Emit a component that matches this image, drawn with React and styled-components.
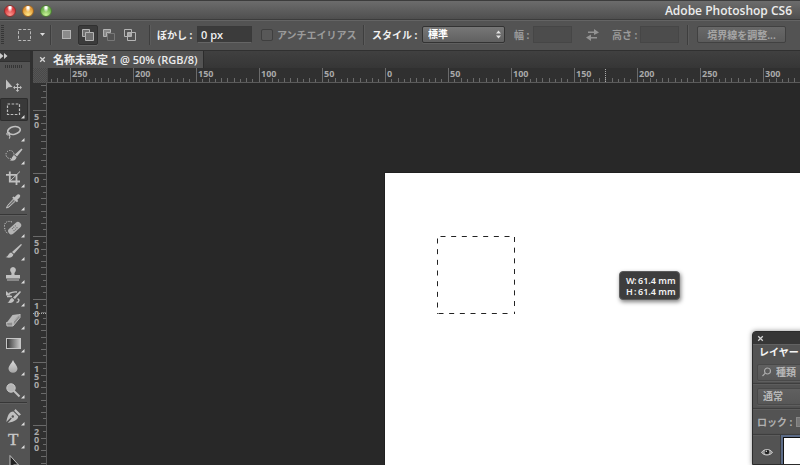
import React from "react";
import styled, { createGlobalStyle, css } from "styled-components";

const UI = '"Open Sans", "Noto Sans", "Noto Sans CJK JP", sans-serif';
const JP = '"Noto Sans", "Noto Sans CJK JP", sans-serif';

const GlobalStyle = createGlobalStyle`
  * { box-sizing: border-box; }
  body { margin: 0; background: #282828; }
  button, input, select { font: inherit; color: inherit; margin: 0; padding: 0; }
  svg { display: block; }
`;

const Window = styled.div`
  position: relative;
  display: flex;
  flex-direction: column;
  height: 100vh;
  overflow: hidden;
  font-family: ${JP};
  font-size: 10px;
  line-height: 16px;
  color: #e6e6e6;
  background: #282828;
`;

const TitleBar = styled.header`
  display: flex;
  align-items: center;
  justify-content: space-between;
  height: 20px;
  flex: none;
  padding: 2px 8px 0 4px;
  background: linear-gradient(#3c3c3c 0 1px, #6c6c6c 1px, #4f4f4f 19px, #3c3c3c 19px);
`;

const Lights = styled.div`
  display: flex;
  gap: 6px;
`;

const Light = styled.button`
  width: 12px;
  height: 12px;
  border: 1px solid ${(p) => p.$edge};
  border-radius: 50%;
  background: radial-gradient(ellipse at 50% 12%, #fff 0 12%, transparent 40%),
    radial-gradient(circle at 50% 90%, ${(p) => p.$glow}, ${(p) => p.$tone} 65%);
`;

const Title = styled.h1`
  margin: 0;
  font: 600 12px/16px ${UI};
  color: #ececec;
`;

const OptionsBar = styled.form`
  display: flex;
  align-items: center;
  height: 31px;
  flex: none;
  padding: 0 0 2px 1px;
  border-top: 1px solid #646464;
  border-bottom: 1px solid #303030;
  background: #535353;
  white-space: nowrap;
  font-weight: 700;
`;

const Grip = styled.span`
  width: 3px;
  height: 19px;
  margin-right: 10px;
  background: repeating-linear-gradient(#363636 0 1px, transparent 1px 2px);
`;

const Divider = styled.span`
  width: 2px;
  height: 20px;
  flex: none;
  margin: 0 ${(p) => p.$after}px 0 ${(p) => p.$before}px;
  border-left: 1px solid #3e3e3e;
  border-right: 1px solid #5c5c5c;
`;

const Preset = styled.button`
  display: flex;
  align-items: center;
  gap: 6px;
  width: 34px;
  border: 0;
  background: none;
`;

const Modes = styled.div`
  display: flex;
  gap: 1px;
`;

const Mode = styled.button`
  display: grid;
  place-items: center;
  width: 20px;
  height: 20px;
  border: 1px solid transparent;
  border-radius: 2px;
  background: none;
  ${(p) => p.$active && css`
    border-color: #303030;
    background: #3b3b3b;
    box-shadow: 0 1px 0 #646464;
  `}
`;

const Label = styled.label`
  flex: none;
  width: ${(p) => p.$width}px;
  color: ${(p) => (p.$off ? "#9b9b9b" : "#f0f0f0")};
`;

const Field = styled.input`
  width: ${(p) => p.$width}px;
  height: 17px;
  padding: 0 3px;
  border: 1px solid #3a3a3a;
  border-bottom-color: #656565;
  background: #3b3b3b;
  font: 600 11px/15px ${UI};
  color: #f0f0f0;
  &:disabled { background: #4c4c4c; border-color: #464646; }
`;

const Check = styled.input`
  appearance: none;
  width: 12px;
  height: 12px;
  margin: 0 4px 0 9px;
  border: 1px solid #3f3f3f;
  border-radius: 2px;
  background: #585858;
`;

const SelectBox = styled.span`
  display: flex;
  align-items: center;
  width: ${(p) => p.$width}px;
  height: 17px;
  flex: none;
  margin-right: ${(p) => p.$after || 0}px;
  padding-right: 3px;
  border: 1px solid ${(p) => (p.$flat ? "#494949" : "#333")};
  border-radius: 2px;
  background: ${(p) => (p.$flat ? "linear-gradient(#606060, #575757)" : "linear-gradient(#777, #606060)")};
  box-shadow: 0 1px 0 #5f5f5f;
`;

const Select = styled.select`
  flex: 1;
  min-width: 0;
  padding-left: 5px;
  border: 0;
  appearance: none;
  background: none;
  font: 700 10px/15px ${JP};
  color: ${(p) => (p.$off ? "#b8b8b8" : "#fff")};
`;

const Swap = styled.span`
  width: 40px;
  padding-left: 14px;
`;

const Refine = styled.button`
  width: 89px;
  height: 17px;
  flex: none;
  border: 1px solid #414141;
  border-radius: 2px;
  background: linear-gradient(#686868, #5b5b5b);
  font: 700 10px/14px ${JP};
  color: #a5a5a5;
`;

const Body = styled.div`
  display: flex;
  flex: 1;
  min-height: 0;
`;

const Toolbox = styled.nav`
  width: 30px;
  flex: none;
  overflow: hidden;
  background: #535353;
`;

const Expand = styled.button`
  display: block;
  width: 100%;
  height: 11px;
  border: 0;
  border-bottom: 1px solid #303030;
  background: #393939;
`;

const ToolGrip = styled.div`
  width: 18px;
  height: 3px;
  margin: 3px 5px 7px;
  background: repeating-linear-gradient(90deg, #343434 0 1px, transparent 1px 2px);
`;

const Tool = styled.button`
  display: block;
  width: 28px;
  height: 23px;
  border: 0;
  border-radius: 2px;
  color: #c0c0c0;
  background: none;
  ${(p) => p.$active && css`
    background: #393939;
    box-shadow: inset 0 0 0 1px #2d2d2d;
  `}
`;

const ToolRule = styled.hr`
  width: 27px;
  height: 2px;
  margin: 1px 0;
  border: 0;
  border-top: 1px solid #373737;
  border-bottom: 1px solid #5e5e5e;
`;

const Document = styled.main`
  display: flex;
  flex-direction: column;
  flex: 1;
  min-width: 0;
  border-left: 3px solid #303030;
`;

const Tabs = styled.div`
  display: flex;
  height: 17px;
  flex: none;
  background: linear-gradient(#404040, #363636);
`;

const Tab = styled.div`
  display: flex;
  align-items: center;
  padding: 0 6px;
  border-right: 1px solid #2c2c2c;
  background: #535353;
  font: 600 11px/16px "Open Sans", "Noto Sans CJK JP", sans-serif;
  color: #ececec;
  white-space: nowrap;
`;

const Close = styled.button`
  width: 7px;
  height: 7px;
  margin-right: ${(p) => p.$gap || 0}px;
  border: 0;
  background: none;
`;

const RulerRow = styled.div`
  display: flex;
  height: 15px;
  flex: none;
  background: #303030;
`;

const Corner = styled.div`
  width: 14px;
  flex: none;
  background: repeating-conic-gradient(#555 0 25%, #494949 0 50%) 0 0 / 2px 2px;
`;

const TopRuler = styled.div`
  position: relative;
  display: flex;
  flex: 1;
  min-width: 0;
  overflow: hidden;
  border-bottom: 1px solid #5a5a5a;
  border-left: 1px solid #484848;
`;

const TopTrack = styled.div`
  display: flex;
  margin-left: -41px;
`;

const TopCell = styled.div`
  display: grid;
  width: 63px;
  flex: none;
  font: 700 9px/12px ${UI};
  color: #a9a9a9;
  > * { grid-area: 1 / 1; }
  > span { padding-left: 2px; justify-self: start; }
`;

const Pointer = styled.i`
  position: absolute;
  top: 1px;
  left: 557px;
  height: 13px;
  border-left: 1px dotted #aaa;
`;

const SidePointer = styled.i`
  position: absolute;
  top: 230px;
  left: 0;
  width: 13px;
  border-top: 1px dotted #aaa;
`;

const Work = styled.div`
  display: flex;
  flex: 1;
  min-height: 0;
`;

const SideRuler = styled.div`
  position: relative;
  width: 14px;
  flex: none;
  overflow: hidden;
  border-right: 1px solid #5a5a5a;
  background: #303030;
`;

const SideTrack = styled.div`
  margin-top: -36px;
`;

const SideCell = styled.div`
  display: grid;
  height: 63px;
  font: 700 9px/8px ${UI};
  color: #a9a9a9;
  > * { grid-area: 1 / 1; }
  > span { align-self: start; width: 6px; padding: 3px 0 0 1px; word-break: break-all; }
`;

const Stage = styled.section`
  position: relative;
  flex: 1;
  overflow: hidden;
  background: #282828;
`;

const Artboard = styled.div`
  position: absolute;
  top: 90px;
  left: 338px;
  right: 0;
  bottom: 0;
  background: #fff;
  box-shadow: 0 0 0 1px #202020;
`;

const Marquee = styled.svg`
  position: absolute;
  top: 63px;
  left: 52px;
`;

const Readout = styled.output`
  position: absolute;
  top: 98px;
  left: 234px;
  padding: 3px 4px 2px 6px;
  border: 1px solid #5c5c5c;
  border-radius: 4px;
  background: #3d3d3d;
  box-shadow: 1px 2px 4px rgba(0, 0, 0, 0.5);
  font: 600 9px/11px "Noto Sans", sans-serif;
  color: #f2f2f2;
  white-space: pre;
  > div { display: grid; grid-template-columns: 8px 4px 37px; }
`;

const Panel = styled.aside`
  position: absolute;
  top: 331px;
  left: 752px;
  width: 240px;
  bottom: 0;
  overflow: hidden;
  border: 1px solid #2c2c2c;
  border-radius: 4px 4px 0 0;
  background: #535353;
  box-shadow: 0 0 5px rgba(0, 0, 0, 0.45);
  font-weight: 700;
`;

const PanelHead = styled.div`
  display: flex;
  align-items: center;
  height: 12px;
  padding-left: 4px;
  background: #363636;
`;

const PanelTab = styled.h2`
  margin: 0;
  height: 17px;
  padding-left: 6px;
  border-top: 1px solid #626262;
  font: 700 10px/15px ${JP};
  color: #f4f4f4;
`;

const PanelRow = styled.div`
  display: flex;
  align-items: center;
  height: ${(p) => p.$height}px;
  padding-left: 4px;
  border-bottom: 1px solid #3e3e3e;
  box-shadow: inset 0 -1px 0 #505050, 0 1px 0 #5d5d5d;
  color: #b0b0b0;
  white-space: nowrap;
`;

const LockButton = styled.button`
  width: 16px;
  height: 10px;
  margin-left: 4px;
  border: 1px solid #888;
  background: #777;
`;

const Layer = styled.div`
  display: flex;
  height: 34px;
`;

const Eye = styled.button`
  display: grid;
  place-items: center;
  width: 28px;
  border: 0;
  border-right: 1px solid #3e3e3e;
  background: none;
`;

const Thumb = styled.div`
  flex: 1;
  padding: 2px 0 0 2px;
  background: #5c6c88;
  &::before {
    content: "";
    display: block;
    height: 32px;
    border: 1px solid #111;
    border-bottom: 0;
    background: #fff;
  }
`;

const CloseMark = () => (
  <svg width="7" height="7" viewBox="0 0 7 7" stroke="#d5d5d5" strokeWidth="1.3">
    <path d="M1.2 1.2 5.8 5.8M5.8 1.2 1.2 5.8" />
  </svg>
);

const UpDown = () => (
  <svg width="5" height="9" viewBox="0 0 5 9" fill="#e2e2e2">
    <path d="M0 3.5 2.5.5 5 3.5zM0 5.5h5L2.5 8.5z" />
  </svg>
);

const stroke = { fill: "none", stroke: "currentColor" };

const tools = [
  ["移動", <g key="i"><path fill="currentColor" d="M6 4.5v10l2.4-2.3 4.2-.3z" /><path {...stroke} strokeWidth="1.1" d="M17.5 9v7M14 12.5h7" /><path fill="currentColor" d="m17.500 8 1.800 2h-3.600zm0 9 1.800-2h-3.600zm-4.500-4.500 2-1.800v3.600zm9 0-2-1.800v3.600z" /></g>, "plain"],
  ["長方形選択", <path key="i" {...stroke} strokeWidth="1.2" strokeDasharray="2.6 1.5" d="M7.500 6h12v10.500h-12z" />, "active"],
  ["なげなわ", <g key="i" {...stroke} strokeWidth="1.6"><ellipse cx="14" cy="9.5" rx="6.4" ry="3.8" transform="rotate(-12 14 9.5)" /><path strokeWidth="1.1" d="M9.500 11.500c-3-.5-3.500 2.500-1.500 2.500 2.300 0 2-2.500.5-2.200M9 14c1.500 1 1 2.500 0 3.500" /></g>],
  ["クイック選択", <g key="i"><circle {...stroke} cx="10" cy="10.500" r="4" strokeDasharray="1.3 1.2" /><path fill="currentColor" d="m21.500 4.500 1 1-5.500 7-2.200-1.900zM14.300 11.300l2.300 2c-.8 3.500-4.100 4-7.100 3 2.600-.5 2.300-4.200 4.800-5z" /></g>],
  ["切り抜き", <g key="i"><path {...stroke} strokeWidth="1.8" d="M9.800 4.500v10H20M6 7.800h10.500V18" /><path {...stroke} d="M10 14 20 4.500" /></g>],
  ["スポイト", <g key="i"><path fill="#777" stroke="currentColor" d="m13.500 9 2 2-6.500 6-2.500 1 1-2.500z" /><path fill="currentColor" d="m12.200 7.700 1.300-1.300 1.200.9c1.500-2 3.500-4 5-2.500s-.5 3.500-2.500 5l1 1.200-1.300 1.300z" /></g>],
  "rule",
  ["修復ブラシ", <g key="i"><path {...stroke} strokeDasharray="1.2 1.2" d="M12 5c-5-2-8 1-7.500 5S6 16 8 16" /><g transform="rotate(-42 14.500 11)"><rect x="7" y="8" width="15" height="6.500" rx="3" fill="#b4b4b4" /><path fill="#5c5c5c" d="M12 9.500h1v1h-1zm2 0h1v1h-1zm2 0h1v1h-1zm-4 2.500h1v1h-1zm2 0h1v1h-1zm2 0h1v1h-1z" /></g></g>],
  ["ブラシ", <path key="i" fill="currentColor" d="m21 4 1 .8-8 9-2-1.800zM11.200 12.500l2.200 2c-1 3.500-4.500 4-7.900 2.500 3-.3 2.700-4 5.700-4.500z" />],
  ["スタンプ", <path key="i" fill="currentColor" d="M13 4a3 3 0 0 1 2.500 4.500c-1.200 1.500-1.200 2-.8 3.500h5.300v3.500H6V12h5.300c.4-1.500.4-2-.8-3.500A3 3 0 0 1 13 4zM7 16.500h12v1H7z" />],
  ["ヒストリーブラシ", <g key="i"><path fill="currentColor" d="m20 5 1 1-6 7-2-1.500zM12.300 12l2 2c-1 3-4 3.500-7 2.500 2.500-.5 2.300-4 5-4.500z" /><path {...stroke} strokeWidth="1.4" d="M9 7.500c3-1.500 5-2 8-1.500M7 10.500h5M17.500 13c2 0 2 3-1 3.500" /><path fill="currentColor" d="M6 5v4.500h5z" /></g>],
  ["消しゴム", <g key="i"><path fill="#b7b7b7" d="m12.500 6 7-1L13 13l-6.500 1z" /><path fill="#8d8d8d" stroke="#bdbdbd" d="M6.500 13.500 13 13v4H7zM13 13l7-8v3.500L13 17z" /></g>],
  ["グラデーション", <rect key="i" x="6.5" y="6.5" width="14" height="10" fill="url(#fade)" stroke="#c6c6c6" />],
  ["ぼかし", <path key="i" fill="url(#drop)" d="M13 5c1 3 4.500 5.500 4.500 9a4.600 4.600 0 0 1-9 0C8.500 10.500 12 8 13 5z" />],
  ["覆い焼き", <g key="i"><circle cx="11" cy="10" r="4.2" fill="#b4b4b4" stroke="#cacaca" /><path {...stroke} strokeWidth="2" d="m14 13 5.500 5.500" /></g>],
  "rule",
  ["ペン", <g key="i"><path fill="currentColor" d="m15.500 4 5.500 5.500-1.900 1.300-5-5zM13.300 6.500l5 5c-.8 3.500-3 4.500-10.500 6.500l4-4.500-1-1-4.500 4.500c1.500-7 2.700-10 7-10.500z" /><circle cx="12.800" cy="11.500" r="1.200" fill="#555" /></g>],
  ["文字", "T"],
  ["パス選択", <path key="i" fill="#222" stroke="currentColor" d="M10 4.500v13l3.500-3.500h5z" />],
];

const TypeGlyph = styled.text`
  font: 400 17px "Liberation Serif", serif;
`;

const ToolIcon = ({ art, plain }) => (
  <svg width="28" height="23" viewBox="0 0 28 23">
    {art === "T" ? <TypeGlyph x="8" y="17" fill="#c8c8c8" stroke="#c8c8c8" strokeWidth=".4">T</TypeGlyph> : art}
    {!plain && <path fill="#dedede" d="M24.500 17v3.500H21z" />}
  </svg>
);

const modes = [
  ["新規選択", <rect key="i" x="1.5" y="1.5" width="8" height="8" fill="#8b8b8b" stroke="#b4b4b4" />],
  ["選択範囲に追加", <path key="i" fill="#707070" stroke="#b4b4b4" d="M.5.5h7v3h4v8h-8v-4h-3zM3.500 7.500v-4h4" />],
  ["選択範囲から一部削除", <g key="i"><path fill="#888" stroke="#b4b4b4" d="M.5.5h7v3h-4v4h-3z" /><path fill="none" stroke="#777" d="M4.500 4.500h7v7h-7z" /></g>],
  ["共通範囲", <g key="i" fill="none" stroke="#b4b4b4"><path d="M.5.5h7v7h-7zM3.500 3.500h8v8h-8z" /><path fill="#999" d="M4 4h3v3H4z" /></g>],
];

const topTicks = "M.5 0V14M6.500 11v3M13.500 10v4M19.500 11v3M25.500 10v4M31.500 10v4M38.500 10v4M44.500 11v3M50.500 10v4M56.500 11v3";
const sideTicks = "M0 .5H13M10 6.500h3M8 13.500h5M10 19.500h3M8 25.500h5M8 31.500h5M8 38.500h5M10 44.500h3M8 50.500h5M10 56.500h3";

const topMarks = ["", 250, 200, 150, 100, 50, 0, 50, 100, 150, 200, 250, 300];
const sideMarks = ["", 50, 0, 50, 100, 150, 200];

export default function App() {
  return (
    <Window>
      <GlobalStyle />
      <TitleBar>
        <Lights>
          <Light aria-label="閉じる" $edge="#8b3030" $tone="#d93a3c" $glow="#ff9a92" />
          <Light aria-label="しまう" $edge="#986326" $tone="#e29a35" $glow="#ffe98c" />
          <Light aria-label="拡大" $edge="#4c7a35" $tone="#6bb04a" $glow="#ccf59a" />
        </Lights>
        <Title>Adobe Photoshop CS6</Title>
      </TitleBar>

      <OptionsBar onSubmit={(e) => e.preventDefault()}>
        <Grip />
        <Preset type="button" aria-label="ツールプリセット">
          <svg width="20" height="14" viewBox="0 0 20 14">
            <path fill="none" stroke="#b9b9b9" strokeDasharray="3 1.6" d="M4.500 1.500h12v11h-12z" />
          </svg>
          <svg width="5" height="3" viewBox="0 0 5 3"><path fill="#ddd" d="M0 0h5L2.500 3z" /></svg>
        </Preset>
        <Divider $before={2} $after={5} />
        <Modes>
          {modes.map(([name, art], i) => (
            <Mode key={name} type="button" aria-label={name} $active={i === 1}>
              <svg width="12" height="12" viewBox="0 0 12 12">{art}</svg>
            </Mode>
          ))}
        </Modes>
        <Divider $before={9} $after={6} />
        <Label htmlFor="feather" $width={40}>ぼかし :</Label>
        <Field id="feather" defaultValue="0 px" $width={55} />
        <Check id="alias" type="checkbox" disabled />
        <Label htmlFor="alias" $off $width={86}>アンチエイリアス</Label>
        <Divider $before={0} $after={7} />
        <Label htmlFor="style" $width={50}>スタイル :</Label>
        <SelectBox $width={83} $after={9}>
          <Select id="style" defaultValue="標準"><option>標準</option></Select>
          <UpDown />
        </SelectBox>
        <Label htmlFor="w" $off $width={19}>幅 :</Label>
        <Field id="w" disabled $width={39} />
        <Swap>
          <svg width="13" height="12" viewBox="0 0 13 12" fill="#939393">
            <path d="M2 2.500h6V0l5 3.500L8 6V4H2zM11 8H5V5.500L0 8.500 5 12V9.500h6z" />
          </svg>
        </Swap>
        <Label htmlFor="h" $off $width={28}>高さ :</Label>
        <Field id="h" disabled $width={39} />
        <Divider $before={8} $after={8} />
        <Refine type="button">境界線を調整...</Refine>
      </OptionsBar>

      <Body>
        <Toolbox>
          <Expand aria-label="パネルを展開">
            <svg width="8" height="6" viewBox="0 0 8 6" fill="#ccc"><path d="m0 0 3.500 3L0 6zM4 0l3.500 3L4 6z" /></svg>
          </Expand>
          <ToolGrip />
          {tools.map((t, i) =>
            t === "rule" ? <ToolRule key={i} /> : (
              <Tool key={i} aria-label={t[0]} $active={t[2] === "active"}>
                <ToolIcon art={t[1]} plain={t[2] === "plain"} />
              </Tool>
            )
          )}
          <svg width="0" height="0">
            <linearGradient id="fade"><stop stopColor="#333" /><stop offset="1" stopColor="#ccc" /></linearGradient>
            <linearGradient id="drop" x2="0" y2="1"><stop stopColor="#ddd" /><stop offset="1" stopColor="#a5a5a5" /></linearGradient>
          </svg>
        </Toolbox>

        <Document>
          <Tabs>
            <Tab><Close aria-label="タブを閉じる" $gap={7}><CloseMark /></Close>名称未設定 1 @ 50% (RGB/8)</Tab>
          </Tabs>
          <RulerRow>
            <Corner />
            <TopRuler>
              <TopTrack>
                {topMarks.map((n, i) => (
                  <TopCell key={i}>
                    <svg width="63" height="14" stroke="#6a6a6a"><path d={topTicks} /></svg>
                    <span>{n}</span>
                  </TopCell>
                ))}
              </TopTrack>
              <Pointer />
            </TopRuler>
          </RulerRow>
          <Work>
            <SideRuler>
              <SideTrack>
                {sideMarks.map((n, i) => (
                  <SideCell key={i}>
                    <svg width="13" height="63" stroke="#6a6a6a"><path d={sideTicks} /></svg>
                    <span>{n}</span>
                  </SideCell>
                ))}
              </SideTrack>
              <SidePointer />
            </SideRuler>
            <Stage>
              <Artboard>
                <Marquee width="80" height="80" viewBox="0 0 80 80" fill="none" stroke="#222" strokeDasharray="5 5.67">
                  <path d="M3.500 .5H78" />
                  <path d="M77.500 1v77" />
                  <path d="M.5 2.500V78" />
                  <path d="M1.500 77.500H74" />
                </Marquee>
                <Readout>
                  <div><span>W</span><span>:</span><span>61.4 mm</span></div>
                  <div><span>H</span><span>:</span><span>61.4 mm</span></div>
                </Readout>
              </Artboard>
            </Stage>
          </Work>
        </Document>
      </Body>

      <Panel>
        <PanelHead><Close aria-label="パネルを閉じる"><CloseMark /></Close></PanelHead>
        <PanelTab>レイヤー</PanelTab>
        <PanelRow $height={23}>
          <SelectBox $flat $width={90}>
            <svg width="13" height="10" viewBox="0 0 13 10" fill="none" stroke="#aaa" strokeWidth="1.2">
              <circle cx="9.500" cy="4" r="3" /><path d="M7.300 6.200 4.500 9" />
            </svg>
            <Select $off aria-label="フィルター" defaultValue="種類"><option>種類</option></Select>
          </SelectBox>
        </PanelRow>
        <PanelRow $height={25}>
          <SelectBox $flat $width={90}>
            <Select $off aria-label="描画モード" defaultValue="通常"><option>通常</option></Select>
          </SelectBox>
        </PanelRow>
        <PanelRow $height={26}>ロック :<LockButton aria-label="透明ピクセルをロック" /></PanelRow>
        <Layer>
          <Eye aria-label="レイヤーの表示">
            <svg width="12" height="10" viewBox="0 0 12 10">
              <path d="M.5 5.500C3 1.500 9 1.500 11.500 5.500 9 8.800 3 8.800.5 5.500z" fill="#999" stroke="#ccc" />
              <circle cx="6" cy="5" r="2.300" fill="#222" /><circle cx="5.300" cy="4.200" r=".7" fill="#eee" />
            </svg>
          </Eye>
          <Thumb />
        </Layer>
      </Panel>
    </Window>
  );
}
